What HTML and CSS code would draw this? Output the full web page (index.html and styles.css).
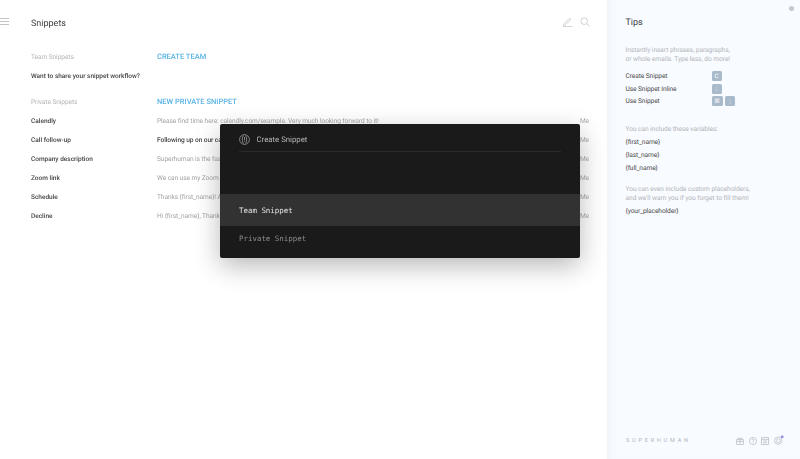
FILE: index.html
```html
<!DOCTYPE html>
<html lang="en">
<head>
<meta charset="utf-8">
<title>Snippets</title>
<link rel="stylesheet" href="styles.css">
</head>
<body>
<div class="app">
  <main class="main">
    <header class="topbar">
      <svg class="menu" width="9" height="7" viewBox="0 0 9 7"><path d="M0 .5h9M0 3.5h9M0 6.5h9" stroke="#b4b4b4" stroke-width=".8" fill="none"/></svg>
      <h1 class="title">Snippets</h1>
      <div class="tools">
        <svg width="11" height="10" viewBox="0 0 11 10" fill="none" stroke="#c4c4c4" stroke-width=".8"><path d="M1.5 7.5 7.5 1.2l1.4 1.3-6.2 6-1.6.3zM1 9.6h9.5"/></svg>
        <svg width="10" height="10" viewBox="0 0 10 10" fill="none" stroke="#c4c4c4" stroke-width=".8"><circle cx="4.2" cy="4.2" r="3.3"/><path d="m6.7 6.7 2.9 2.9"/></svg>
      </div>
    </header>
    <section class="group team">
      <div class="row head"><span class="section">Team Snippets</span><a class="action">CREATE TEAM</a></div>
      <div class="row"><span class="name">Want to share your snippet workflow?</span></div>
    </section>
    <section class="group">
      <div class="row head"><span class="section">Private Snippets</span><a class="action">NEW PRIVATE SNIPPET</a></div>
      <div class="row"><span class="name">Calendly</span><span class="text">Please find time here: calendly.com/example. Very much looking forward to it!</span><span class="me">Me</span></div>
      <div class="row"><span class="name">Call follow-up</span><span class="text strong">Following up on our call</span><span class="me">Me</span></div>
      <div class="row"><span class="name">Company description</span><span class="text">Superhuman is the fastest</span><span class="me">Me</span></div>
      <div class="row"><span class="name">Zoom link</span><span class="text">We can use my Zoom link</span><span class="me">Me</span></div>
      <div class="row"><span class="name">Schedule</span><span class="text">Thanks {first_name}! A</span><span class="me">Me</span></div>
      <div class="row"><span class="name">Decline</span><span class="text">Hi {first_name}, Thanks</span><span class="me">Me</span></div>
    </section>
  </main>

  <aside class="tips">
    <span class="dot"></span>
    <h2 class="title">Tips</h2>
    <p class="note intro">Instantly insert phrases, paragraphs,<br>or whole emails. Type less, do more!</p>
    <div class="shortcut"><span>Create Snippet</span><span class="keys"><kbd>C</kbd></span></div>
    <div class="shortcut"><span>Use Snippet Inline</span><span class="keys"><kbd>;</kbd></span></div>
    <div class="shortcut"><span>Use Snippet</span><span class="keys"><kbd class="wide">⌘</kbd><kbd>;</kbd></span></div>
    <p class="note vars">You can include these variables:</p>
    <div class="var">{first_name}</div>
    <div class="var">{last_name}</div>
    <div class="var">{full_name}</div>
    <p class="note custom">You can even include custom placeholders,<br>and we'll warn you if you forget to fill them!</p>
    <div class="var">{your_placeholder}</div>
    <footer class="foot">
      <span class="brand">SUPERHUMAN</span>
      <div class="foot-icons">
        <svg width="8" height="8" viewBox="0 0 8 8" fill="none" stroke="#b4b8bd" stroke-width=".7"><path d="M.6 2.4h6.8v5.2H.6zM.6 4.4h6.8M4 2.4v5.2M2.2 2.2C1.4.8 3.4.2 4 2.2 4.6.2 6.6.8 5.8 2.2"/></svg>
        <svg width="8" height="8" viewBox="0 0 8 8" fill="none" stroke="#b4b8bd" stroke-width=".7"><circle cx="4" cy="4" r="3.6"/><path d="M2.9 3.1c0-1.4 2.2-1.4 2.2 0 0 .8-1.1.8-1.1 1.7M4 5.5v.8"/></svg>
        <svg width="8" height="8" viewBox="0 0 8 8" fill="none" stroke="#b4b8bd" stroke-width=".7"><path d="M.5.5h7v7h-7zM.5 2.4h7M2 4h4M2 5.7h4"/></svg>
        <svg class="bell" width="10" height="10" viewBox="0 0 10 10" fill="none" stroke="#b4b8bd" stroke-width=".7"><circle cx="4.2" cy="5.6" r="3.7"/><circle cx="4.2" cy="5.6" r="1.9"/><circle cx="8.2" cy="1.8" r="1.5" fill="#9a96e0" stroke="none"/></svg>
      </div>
    </footer>
  </aside>

  <span class="sliver"></span>
  <div class="modal">
    <div class="modal-head">
      <svg width="11" height="11" viewBox="0 0 11 11" fill="none" stroke="#b0b0b0" stroke-width=".7"><circle cx="5.5" cy="5.5" r="4.9"/><path d="M4.4 1.6C3 3 3 8 4.4 9.4M6.6 1.6C8 3 8 8 6.6 9.4M5.5 3v3.4M5.5 7.4v.6"/></svg>
      <span>Create Snippet</span>
    </div>
    <div class="option active">Team Snippet</div>
    <div class="option">Private Snippet</div>
  </div>
</div>
</body>
</html>
```

FILE: styles.css
```css
* { box-sizing: border-box; }
html, body { margin: 0; height: 100%; overflow: hidden; }
body { font-family: Roboto, "Liberation Sans", sans-serif; font-size: 6.6px; letter-spacing: -.08px; color: #3c3c3c; background: #fff; text-rendering: geometricPrecision; }
.app { display: flex; height: 459px; position: relative; filter: blur(.3px); }
.main { width: 607px; padding: 0 18px 0 31px; flex: none; }
.topbar { height: 44px; display: flex; align-items: center; position: relative; }
.menu { position: absolute; left: -31px; top: 18px; }
.title { font-size: 9px; font-weight: 400; letter-spacing: 0; margin: 0; color: #3f3f3f; }
.topbar .title { padding-top: 3px; }
.tools { margin-left: auto; margin-right: -1px; display: flex; gap: 7px; align-items: center; }
.group { display: flex; flex-direction: column; }
.team { margin-top: 3px; margin-bottom: 7px; }
.row { height: 19px; padding-top: .7px; display: grid; grid-template-columns: 126px 1fr 10px; align-items: center; }
.head { height: 19px; padding-top: 0; }
.section { color: #b4b4b4; }
.action { color: #58b2e6; font-size: 7.5px; font-weight: 500; letter-spacing: 0; }
.name { color: #444; font-weight: 500; white-space: nowrap; font-size: 6.5px; letter-spacing: 0; }
.text { color: #a2a2a2; white-space: nowrap; overflow: hidden; }
.text.strong { color: #484848; font-weight: 500; }
.me { color: #a8a8a8; text-align: right; }
.tips { flex: 1; background: #f8fbff; padding: 0 0 0 18.5px; position: relative; box-shadow: inset 8px 0 8px -7px rgba(150,160,175,.12); }
.tips .title { line-height: 47px; }
.dot { position: absolute; right: 6px; top: 6px; width: 5px; height: 5px; border-radius: 50%; background: #c6c8cc; }
.note { margin: 0; color: #b2b4b8; line-height: 8.7px; letter-spacing: -.04px; }
.intro { margin-top: -1px; margin-bottom: 6.5px; }
.shortcut { display: flex; height: 12.6px; align-items: center; color: #4a4a4a; }
.shortcut > span:first-child { width: 86px; }
.keys { display: flex; gap: 2.5px; }
kbd { font-family: inherit; font-size: 6px; width: 10px; height: 10px; display: flex; align-items: center; justify-content: center; background: #a9bacb; color: #fff; border-radius: 1.5px; }
kbd.wide { width: 11px; }
.vars { margin-top: 17px; margin-bottom: 2.5px; }
.var { height: 12.7px; display: flex; align-items: center; color: #4a4a4a; }
.custom { margin-top: 11.5px; margin-bottom: 2px; }
.foot { position: absolute; left: 19px; right: 0; bottom: 15px; display: flex; align-items: center; }
.brand { font-size: 5.6px; letter-spacing: 2.75px; color: #b4b8bd; }
.foot-icons { position: absolute; left: 110px; top: -1px; display: flex; align-items: center; gap: 4.5px; }
.bell { margin-top: -2px; }
.sliver { position: absolute; left: 220px; top: 164px; width: 2px; height: 17px; background: #b0a8e0; }
.modal { position: absolute; left: 220px; top: 124px; width: 360px; height: 134px; background: #1a1a1a; border-radius: 2px; box-shadow: 0 8px 26px rgba(0,0,0,.28); color: #fff; display: flex; flex-direction: column; }
.modal-head { height: 28px; margin: 0 19px; padding-top: 3px; display: flex; align-items: center; gap: 6.5px; border-bottom: 1px solid #2a2a2a; color: #b4b4b4; font-size: 7.8px; letter-spacing: 0; }
.option { font-family: "DejaVu Sans Mono", "Liberation Mono", monospace; font-size: 7.45px; letter-spacing: 0; padding-left: 19px; display: flex; align-items: center; height: 25px; color: #8c8c8c; }
.option.active { margin-top: 42px; height: 32px; background: #323232; color: #e4e4e4; font-weight: 400; }
```
